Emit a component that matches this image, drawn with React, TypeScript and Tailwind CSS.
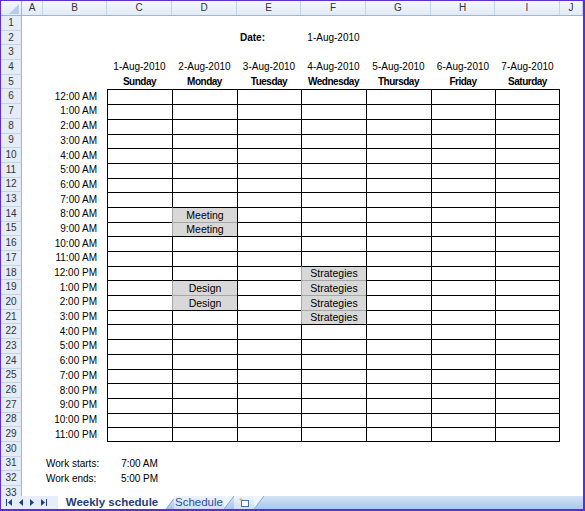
const COLS = ['A', 'B', 'C', 'D', 'E', 'F', 'G', 'H', 'I', 'J'];
const W = [21, 64, 65, 65, 64, 65, 65, 64, 65, 23];

const days = [
  ['1-Aug-2010', 'Sunday'],
  ['2-Aug-2010', 'Monday'],
  ['3-Aug-2010', 'Tuesday'],
  ['4-Aug-2010', 'Wednesday'],
  ['5-Aug-2010', 'Thursday'],
  ['6-Aug-2010', 'Friday'],
  ['7-Aug-2010', 'Saturday'],
];

const hours = [
  '12:00 AM', '1:00 AM', '2:00 AM', '3:00 AM', '4:00 AM', '5:00 AM', '6:00 AM', '7:00 AM',
  '8:00 AM', '9:00 AM', '10:00 AM', '11:00 AM', '12:00 PM', '1:00 PM', '2:00 PM', '3:00 PM',
  '4:00 PM', '5:00 PM', '6:00 PM', '7:00 PM', '8:00 PM', '9:00 PM', '10:00 PM', '11:00 PM',
];

// row -> { columnIndex (0 = C) : label }
const events: Record<number, Record<number, string>> = {
  14: { 1: 'Meeting' },
  15: { 1: 'Meeting' },
  18: { 3: 'Strategies' },
  19: { 1: 'Design', 3: 'Strategies' },
  20: { 1: 'Design', 3: 'Strategies' },
  21: { 3: 'Strategies' },
};

function Cell({ i, className = '', children }: { i: number; className?: string; children?: React.ReactNode }) {
  return (
    <div style={{ width: W[i] }} className={`shrink-0 h-full flex items-center overflow-visible whitespace-nowrap ${className}`}>
      {children}
    </div>
  );
}

function Row({ n, children }: { n: number; children?: React.ReactNode }) {
  return (
    <div className="flex h-[14.7px] shrink-0">
      <div className="w-[21px] shrink-0 h-full flex items-center justify-center bg-[#e4ecf7] border-r border-[#9eb6ce] border-b border-b-[#c5d5e8] text-[10px] text-[#333]">
        {n}
      </div>
      {children}
    </div>
  );
}

function TableRow({ n }: { n: number }) {
  const ev = events[n] || {};
  const isLast = n === 29;
  return (
    <>
      {days.map((_, d) => {
        const label = ev[d];
        const grayAbove = events[n - 1] && events[n - 1][d];
        return (
          <Cell
            key={d}
            i={d + 2}
            className={`justify-center text-[10.5px] border-l border-t ${d === 6 ? 'border-r' : ''} ${isLast ? 'border-b' : ''} ${
              label ? 'bg-[#d8d8d8] border-l-[#a6a6a6]' : 'border-l-black'
            } ${label && grayAbove ? 'border-t-[#a6a6a6]' : 'border-t-black'} border-r-black border-b-black`}
          >
            {label}
          </Cell>
        );
      })}
    </>
  );
}

function TabBar() {
  return (
    <div className="h-[13px] shrink-0 flex items-stretch bg-gradient-to-b from-[#d4e3f7] to-[#a8c7ee]">
      <div className="w-[57px] flex items-center gap-[7px] pl-[5px] bg-[#e6eef9] text-[#1f3f8f]">
        <svg width="6" height="7" viewBox="0 0 6 7"><rect x="0" y="0" width="1" height="7" fill="currentColor" /><path d="M6 0v7L2 3.5z" fill="currentColor" /></svg>
        <svg width="4" height="7" viewBox="0 0 4 7"><path d="M4 0v7L0 3.5z" fill="currentColor" /></svg>
        <svg width="4" height="7" viewBox="0 0 4 7"><path d="M0 0v7l4-3.5z" fill="currentColor" /></svg>
        <svg width="6" height="7" viewBox="0 0 6 7"><path d="M0 0v7l4-3.5z" fill="currentColor" /><rect x="5" y="0" width="1" height="7" fill="currentColor" /></svg>
      </div>
      <div className="w-[108px] bg-white flex items-center justify-center text-[11.5px] font-bold text-[#1f3d7a] leading-none">
        Weekly schedule
      </div>
      <svg width="10" height="13" viewBox="0 0 10 13" className="shrink-0">
        <path d="M0 0L0 13L10 0z" fill="#ffffff" />
        <path d="M0 13L10 0" stroke="#8aa7d2" strokeWidth="1" />
      </svg>
      <div className="w-[50px] -ml-[2px] flex items-center justify-center text-[11.5px] text-[#2a4f9a] leading-none bg-gradient-to-b from-[#eef4fc] to-[#cfe0f6]">
        Schedule
      </div>
      <svg width="10" height="13" viewBox="0 0 10 13" className="shrink-0">
        <path d="M0 0L0 13L10 0z" fill="#eef4fc" />
        <path d="M0 13L10 0" stroke="#8aa7d2" strokeWidth="1" />
      </svg>
      <div className="w-[20px] flex items-center justify-center bg-gradient-to-b from-[#eef4fc] to-[#cfe0f6]">
        <svg width="12" height="11" viewBox="0 0 12 11">
          <rect x="3.5" y="3.5" width="7" height="6" fill="#fff" stroke="#4a6fb0" strokeWidth="1" />
          <path d="M3 0.5L3.7 2.2L5.5 2.5L3.7 3L3 4.6L2.3 3L0.5 2.5L2.3 2.2z" fill="#f0a818" />
        </svg>
      </div>
      <svg width="10" height="13" viewBox="0 0 10 13" className="shrink-0">
        <path d="M0 0L0 13L10 0z" fill="#eef4fc" />
        <path d="M0 13L10 0" stroke="#8aa7d2" strokeWidth="1" />
      </svg>
      <div className="flex-1" />
    </div>
  );
}

export default function App() {
  const font = { fontFamily: '"Liberation Sans", Arial, sans-serif' };
  const rows = [];
  for (let n = 1; n <= 33; n++) {
    let cells: React.ReactNode = null;
    if (n === 2) {
      cells = (
        <>
          <Cell i={0} /><Cell i={1} /><Cell i={2} /><Cell i={3} />
          <Cell i={4} className="pl-[3px] font-bold">Date:</Cell>
          <Cell i={5} className="justify-center">1-Aug-2010</Cell>
        </>
      );
    } else if (n === 4 || n === 5) {
      cells = (
        <>
          <Cell i={0} /><Cell i={1} />
          {days.map((d, k) => (
            <Cell key={k} i={k + 2} className={`justify-center ${n === 5 ? 'font-bold tracking-[-0.5px]' : ''}`}>
              {n === 4 ? d[0] : d[1]}
            </Cell>
          ))}
        </>
      );
    } else if (n >= 6 && n <= 29) {
      cells = (
        <>
          <Cell i={0} />
          <Cell i={1} className="justify-end pr-[10px]">{hours[n - 6]}</Cell>
          <TableRow n={n} />
        </>
      );
    } else if (n === 31 || n === 32) {
      cells = (
        <>
          <Cell i={0} />
          <Cell i={1} className="pl-[3px]">{n === 31 ? 'Work starts:' : 'Work ends:'}</Cell>
          <Cell i={2} className="justify-center">{n === 31 ? '7:00 AM' : '5:00 PM'}</Cell>
        </>
      );
    }
    rows.push(<Row key={n} n={n}>{cells}</Row>);
  }

  return (
    <div style={font} className="w-[585px] h-[511px] bg-white border-t border-l border-r-2 border-b-2 border-[#5b2fd6] flex flex-col overflow-hidden text-[10px] text-black leading-none">
      <div className="h-[15px] shrink-0 flex bg-gradient-to-b from-[#f4f8fd] to-[#e1eaf6] border-b border-[#9eb6ce] text-[10px] text-[#333]">
        <div className="w-[21px] shrink-0 border-r border-[#9eb6ce] relative">
          <svg width="10" height="10" viewBox="0 0 10 10" className="absolute right-[2px] bottom-[1px]">
            <path d="M10 0V10H0z" fill="#b6cbe6" />
          </svg>
        </div>
        {COLS.map((c, i) => (
          <div key={c} style={{ width: W[i] }} className="shrink-0 flex items-center justify-center border-r border-[#c5d5e8]">
            {c}
          </div>
        ))}
      </div>
      <div className="flex-1 flex flex-col overflow-hidden">{rows}</div>
      <TabBar />
    </div>
  );
}
